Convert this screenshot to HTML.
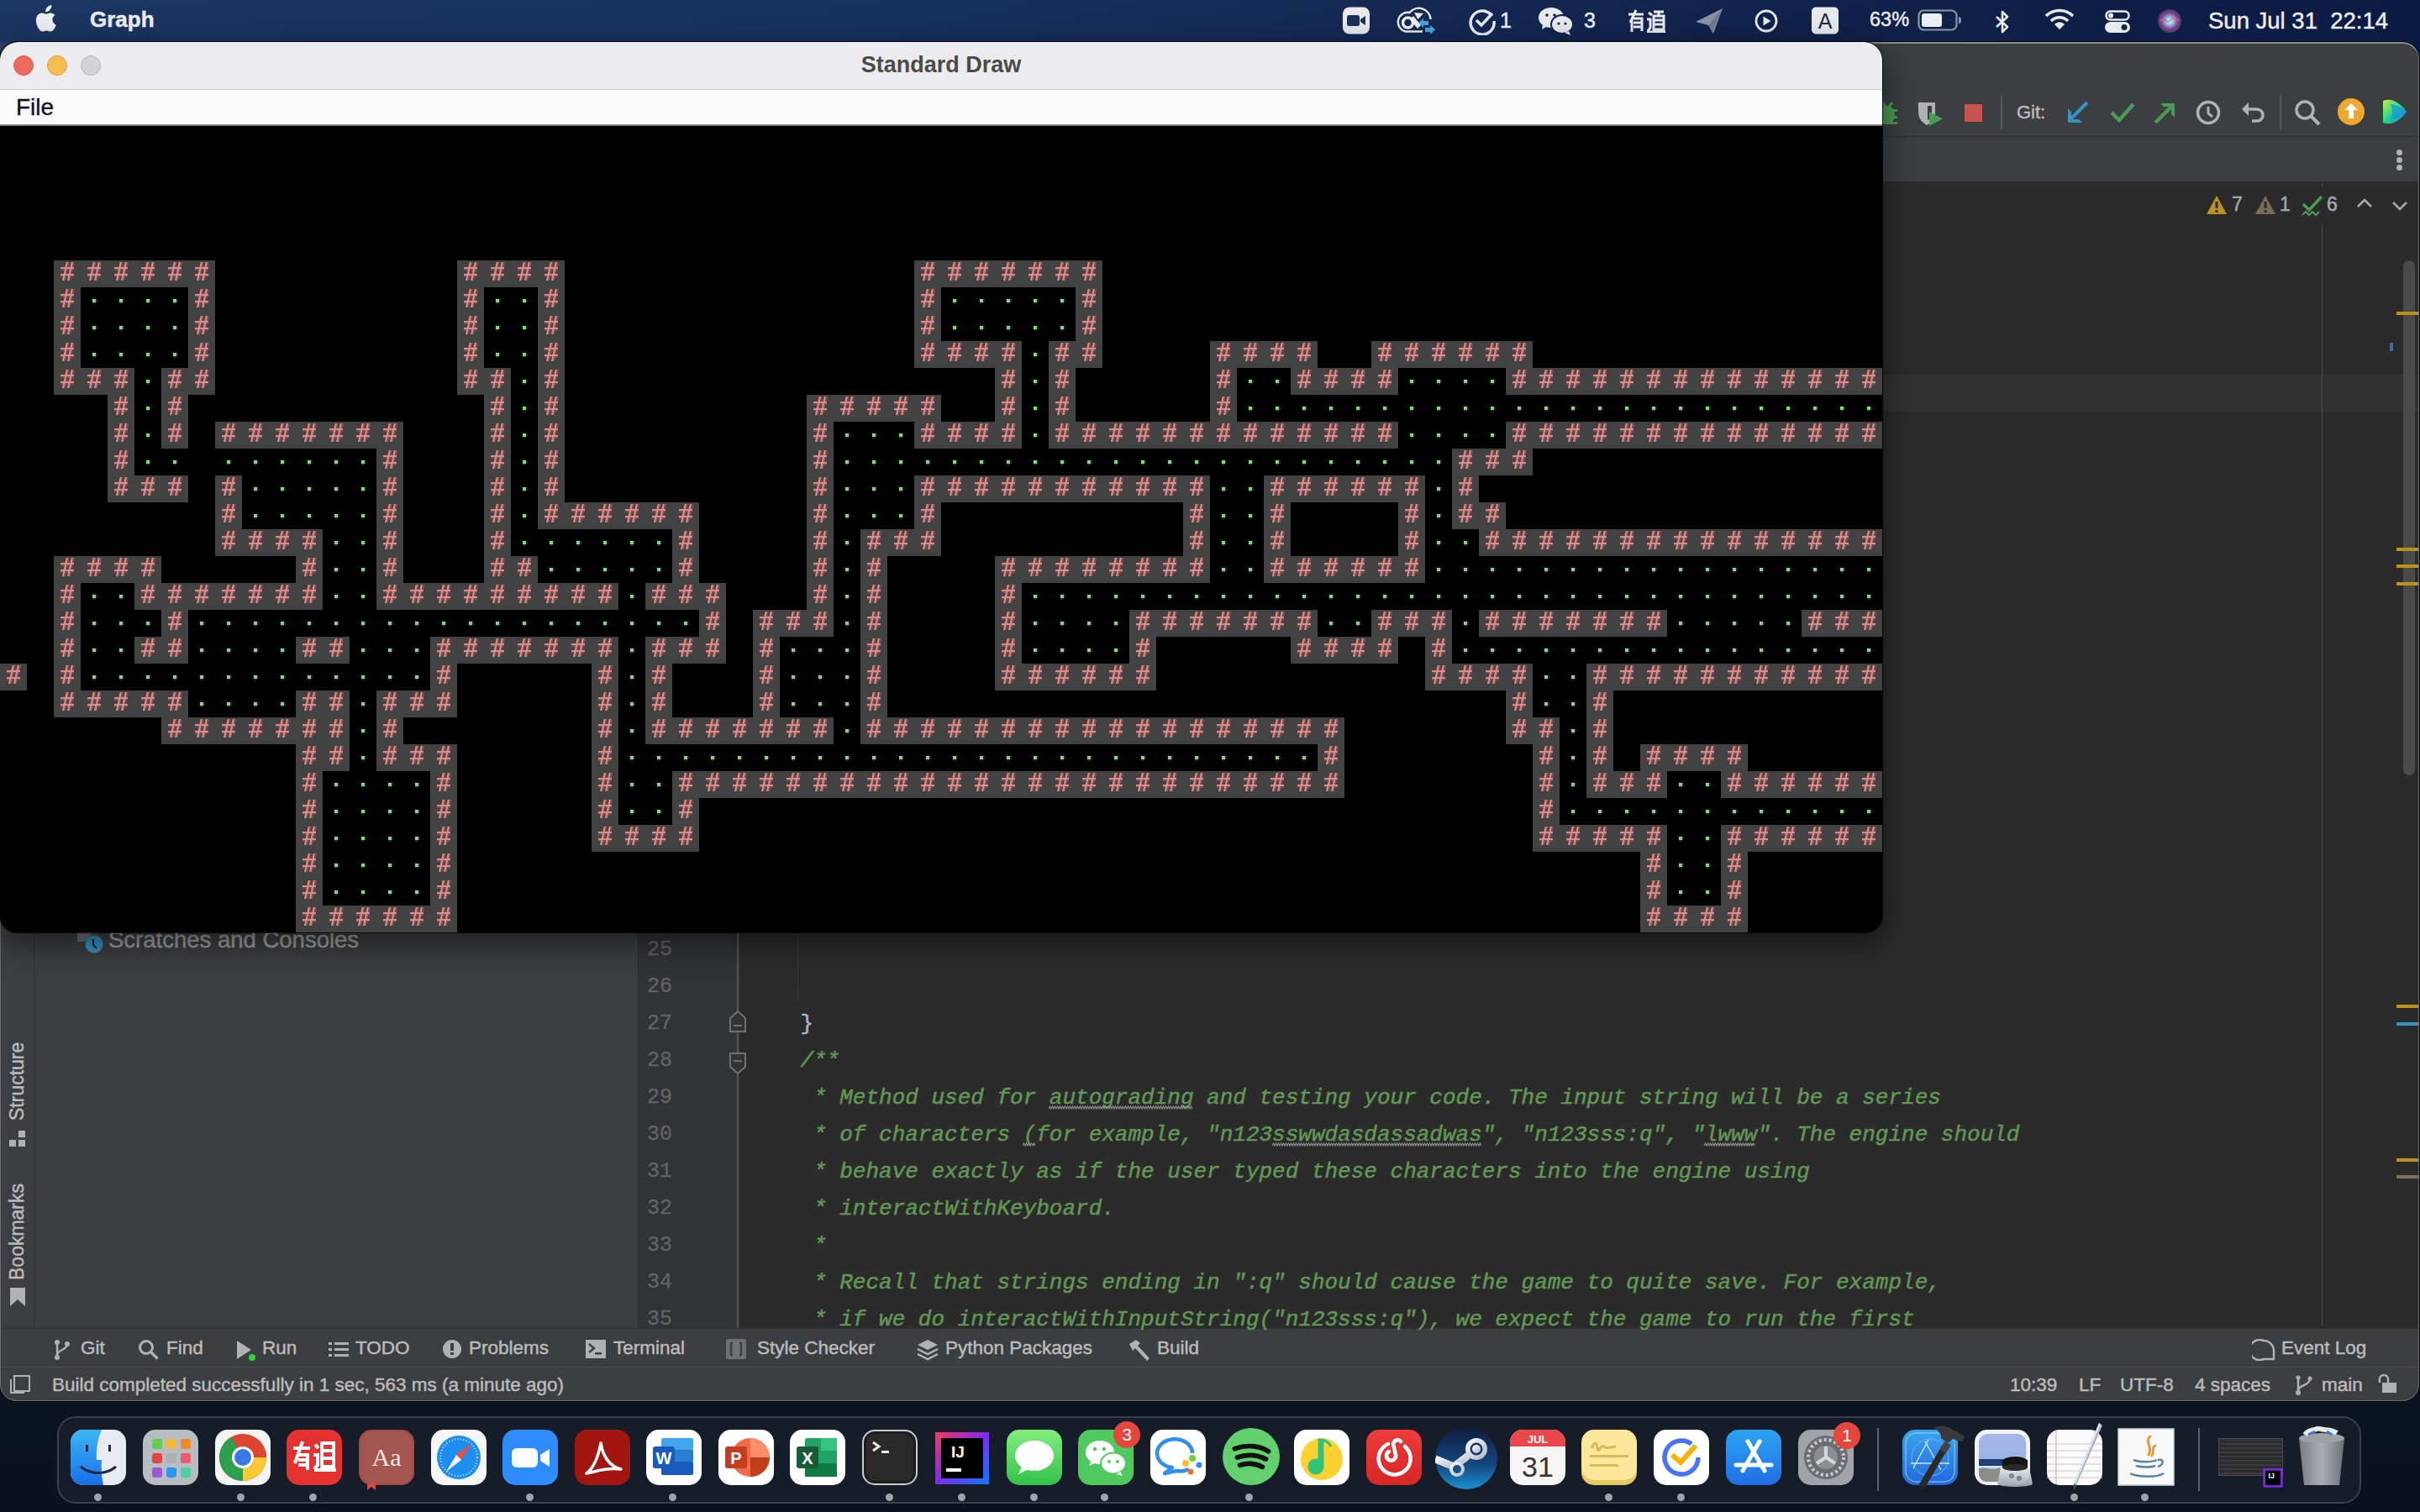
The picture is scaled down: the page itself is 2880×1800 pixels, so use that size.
<!DOCTYPE html>
<html><head><meta charset="utf-8">
<style>
*{margin:0;padding:0;box-sizing:border-box}
html,body{width:2880px;height:1800px;overflow:hidden}
body{position:relative;background:linear-gradient(90deg,#2a4470 0%,#1b3463 35%,#0c1f48 70%,#041a40 100%) 0 0/2880px 300px no-repeat,linear-gradient(180deg,#0d1626 1500px,#0a111c 1800px);font-family:"Liberation Sans",sans-serif}
.abs{position:absolute}
svg{display:block}
#menubar{position:absolute;left:0;top:0;width:2880px;height:50px;background:linear-gradient(90deg,#1d3562 0%,#183260 35%,#11244d 70%,#0c1b42 100%)}
#menubar .t{position:absolute;color:#eceef3;font-size:26px;white-space:nowrap;-webkit-text-stroke:0.45px currentColor}
#ij{position:absolute;left:0;top:50px;width:2879px;height:1618px;background:#3c3f41;border-radius:20px;overflow:hidden}
#ijb{position:absolute;left:0;top:50px;width:2879px;height:1618px;border-radius:20px;border:1px solid #6a6c6e;border-top:2px solid #8a8c8e;box-shadow:0 0 0 1px rgba(0,0,0,0.85);pointer-events:none}
#ij .r{position:absolute}
.ui{color:#bbbbbb;font-size:22.5px;white-space:nowrap;position:absolute;-webkit-text-stroke:0.45px currentColor}
.code{font-family:"Liberation Mono",monospace;font-size:26px;white-space:pre;position:absolute;line-height:44px;-webkit-text-stroke:0.5px currentColor}
.cm{color:#629755;font-style:italic}
.ln{font-family:"Liberation Mono",monospace;font-size:25px;color:#606366;-webkit-text-stroke:0.4px currentColor;position:absolute;width:60px;text-align:right;line-height:44px}
#sd{position:absolute;left:0;top:50px;width:2240px;height:1060px;border-radius:22px 22px 20px 20px;overflow:hidden;background:#000;box-shadow:0 0 0 1px rgba(0,0,0,0.7),0 12px 40px rgba(0,0,0,0.55)}
#sd .title{position:absolute;left:0;top:0;width:2240px;height:57px;background:#ececee;border-bottom:1px solid #cdcdcf}
#sd .menu{position:absolute;left:0;top:57px;width:2240px;height:43px;background:#fafafa;border-bottom:2px solid #7d7d7d}
#sd .game{position:absolute;left:0;top:100px}
#dock{position:absolute;left:68px;top:1686px;width:2742px;height:104px;border-radius:22px;background:#161c28;border:2px solid #3a3f4a}
.dot{position:absolute;top:1778px;width:9px;height:9px;border-radius:50%;background:#9fa3ab}
</style></head><body>
<div id="menubar">
  <svg class="abs" style="left:40px;top:6px" width="27" height="33" viewBox="0 0 27 33"><path fill="#eceef3" d="M19.5 5.5c1.3-1.6 2.2-3.7 2-5.5-1.9.1-4.1 1.3-5.4 2.8-1.2 1.4-2.2 3.5-1.9 5.5 2 .2 4-1 5.3-2.8zM22.3 17.6c0-3.6 2.9-5.3 3.1-5.4-1.7-2.4-4.3-2.8-5.2-2.8-2.2-.2-4.3 1.3-5.4 1.3-1.1 0-2.8-1.3-4.7-1.2C7.6 9.6 5.4 10.9 4.1 13c-2.6 4.5-.7 11.2 1.9 14.9 1.2 1.8 2.7 3.8 4.6 3.7 1.8-.1 2.5-1.2 4.8-1.2 2.2 0 2.9 1.2 4.8 1.1 2 0 3.3-1.8 4.5-3.6 1.4-2.1 2-4.1 2-4.2 0 0-3.9-1.5-4.4-6.1z"/></svg>
  <div class="t" style="left:107px;top:8px;font-weight:bold;font-size:26px">Graph</div>
<svg class="abs" style="left:1597px;top:8px" width="34" height="33" viewBox="0 0 34 33"><rect x="1" y="0.5" width="32" height="32" rx="8" fill="#e8eaee"/><rect x="6" y="10" width="15" height="13" rx="2.5" fill="#1b3058"/><path d="M22 15l6-4v11l-6-4z" fill="#1b3058"/></svg>
<svg class="abs" style="left:1650px;top:0px" width="70" height="50" viewBox="0 0 70 50"><path d="M23 37.5A10.5 10.5 0 0 1 27.5 15A14 14 0 0 1 52.5 23M23 37.5H43" stroke="#eceef3" stroke-width="2.3" fill="none"/><circle cx="25.5" cy="27" r="6" stroke="#eceef3" stroke-width="3.5" fill="none"/><polygon points="28,23 32,19 41,30 37,34" fill="#eceef3"/><polygon points="33,15 44,16 37.5,23" fill="#eceef3"/><path d="M38 27l6-5v3h6v5h-6v3z" fill="#44a6de"/><path d="M58 35l-6-5v3h-6v5h6v3z" fill="#44a6de"/></svg>
<svg class="abs" style="left:1747px;top:8px" width="34" height="34" viewBox="0 0 34 34"><path d="M27 9A14 14 0 1031 17" stroke="#e8eaee" stroke-width="3.5" fill="none"/><path d="M10 16l6 6 13-14" stroke="#e8eaee" stroke-width="3.5" fill="none"/></svg>
<div class="t" style="left:1785px;top:10px;font-size:25px">1</div>
<svg class="abs" style="left:1830px;top:8px" width="44" height="34" viewBox="0 0 44 34"><ellipse cx="16" cy="13" rx="15" ry="12" fill="#e8eaee"/><path d="M6 21l-1 6 7-4z" fill="#e8eaee"/><ellipse cx="29" cy="21" rx="13" ry="11" fill="#e8eaee" stroke="#11244d" stroke-width="2"/><path d="M37 29l2 5-7-3z" fill="#e8eaee"/><circle cx="11" cy="10" r="1.8" fill="#11244d"/><circle cx="20" cy="10" r="1.8" fill="#11244d"/><circle cx="25" cy="20" r="1.6" fill="#11244d"/><circle cx="33" cy="20" r="1.6" fill="#11244d"/></svg>
<div class="t" style="left:1885px;top:10px;font-size:25px">3</div>
<svg class="abs" style="left:1936px;top:11px" width="48" height="28" viewBox="0 0 48 28"><g stroke="#e8eaee" stroke-width="3" fill="none"><path d="M2 6h18M11 1L4 16M8 11h10v15M8 16h10M8 21h10M6 11v16"/><path d="M26 4l4 3M24 12h4v10l-3 4M24 27h22M32 3h12M38 3v4M32 8h12v16H32zM32 13h12M32 18h12"/></g></svg>
<svg class="abs" style="left:2017px;top:9px" width="34" height="32" viewBox="0 0 34 32"><path d="M1 17L33 1 22 31l-6-10z" fill="#8a95a6"/><path d="M16 21l17-20-12 27z" fill="#6f7a8c"/></svg>
<svg class="abs" style="left:2088px;top:11px" width="28" height="28" viewBox="0 0 28 28"><circle cx="14" cy="14" r="12" stroke="#e8eaee" stroke-width="2.8" fill="none"/><path d="M10.5 8.5l9 5.5-9 5.5z" fill="#e8eaee"/></svg>
<svg class="abs" style="left:2155px;top:8px" width="34" height="33" viewBox="0 0 34 33"><rect x="1" y="0.5" width="32" height="32" rx="5" fill="#e8eaee"/><text x="17" y="26" font-family="Liberation Sans" font-size="25" text-anchor="middle" fill="#1b2a4a">A</text></svg>
<div class="t" style="left:2225px;top:10px;font-size:23.5px">63%</div>
<svg class="abs" style="left:2282px;top:11px" width="55" height="26" viewBox="0 0 55 26"><rect x="1.5" y="1.5" width="45" height="23" rx="6" stroke="#8d96a8" stroke-width="2.2" fill="none"/><rect x="5" y="5" width="24" height="16" rx="3" fill="#eceef3"/><path d="M49 9v8c2 0 3-1 3-4s-1-4-3-4z" fill="#8d96a8"/></svg>
<svg class="abs" style="left:2372px;top:12px" width="22" height="28" viewBox="0 0 22 28"><path d="M4 8l13 12-6 6V2l6 6L4 20" stroke="#e8eaee" stroke-width="2.6" fill="none" stroke-linejoin="round"/></svg>
<svg class="abs" style="left:2433px;top:10px" width="36" height="26" viewBox="0 0 36 26"><path d="M2 9a23 23 0 0132 0" stroke="#e8eaee" stroke-width="3.5" fill="none"/><path d="M8 15a14 14 0 0120 0" stroke="#e8eaee" stroke-width="3.5" fill="none"/><path d="M12 19a8 8 0 0112 0l-6 6z" fill="#e8eaee"/></svg>
<svg class="abs" style="left:2505px;top:12px" width="30" height="27" viewBox="0 0 30 27"><rect x="1.5" y="1.5" width="27" height="10" rx="5" stroke="#e8eaee" stroke-width="2.5" fill="none"/><circle cx="7" cy="6.5" r="3" fill="#e8eaee"/><rect x="0" y="14" width="30" height="13" rx="6.5" fill="#e8eaee"/><circle cx="23" cy="20.5" r="3.5" fill="#11244d"/></svg>
<svg class="abs" style="left:2567px;top:10px" width="30" height="30" viewBox="0 0 30 30"><defs><radialGradient id="siri" cx="0.5" cy="0.5" r="0.5"><stop offset="0" stop-color="#ffffff"/><stop offset="0.35" stop-color="#7ec0e8"/><stop offset="0.7" stop-color="#8a3f8a"/><stop offset="1" stop-color="#3a3f70"/></radialGradient></defs><circle cx="15" cy="15" r="14" fill="url(#siri)"/><path d="M4 15c4-6 8 4 11 0s7-6 11 0" stroke="#e85a7a" stroke-width="2" fill="none" opacity="0.7"/></svg>
<div class="t" style="left:2628px;top:9px;font-size:27.5px">Sun Jul 31&nbsp; 22:14</div>

</div>

<div id="ij">
<!-- toolbar / title -->
<div class="r" style="left:0;top:112px;width:2879px;height:1px;background:#2d2f31"></div>
<div class="r" style="left:0;top:166px;width:2879px;height:1px;background:#2d2f31"></div>
<!-- body -->
<div class="r" style="left:40px;top:167px;width:1px;height:1364px;background:#2f3133"></div>
<div class="r" style="left:759px;top:167px;width:1px;height:1364px;background:#2f3133"></div>
<div class="r" style="left:760px;top:167px;width:120px;height:1364px;background:#313335"></div>
<div class="r" style="left:880px;top:167px;width:1999px;height:1364px;background:#2b2b2b"></div>
<div class="r" style="left:880px;top:396px;width:1999px;height:44px;background:#323232"></div>
<div class="r" style="left:2763px;top:168px;width:1px;height:4px;background:#4e4e4e"></div>
<div class="r" style="left:2763px;top:217px;width:1px;height:1312px;background:#4e4e4e"></div>
<div class="r" style="left:2860px;top:260px;width:14px;height:613px;border-radius:7px;background:#4a4a4a"></div>
<div class="r" style="left:2852px;top:321px;width:28px;height:4px;background:#be9117"></div>
<div class="r" style="left:2844px;top:358px;width:4px;height:10px;background:#3a6ea5"></div>
<div class="r" style="left:2852px;top:602px;width:28px;height:4px;background:#be9117"></div>
<div class="r" style="left:2852px;top:622px;width:28px;height:4px;background:#be9117"></div>
<div class="r" style="left:2852px;top:643px;width:28px;height:4px;background:#be9117"></div>
<div class="r" style="left:2852px;top:1146px;width:28px;height:4px;background:#be9117"></div>
<div class="r" style="left:2852px;top:1167px;width:28px;height:4px;background:#3592c4"></div>
<div class="r" style="left:2852px;top:1329px;width:28px;height:4px;background:#be9117"></div>
<div class="r" style="left:2852px;top:1349px;width:28px;height:4px;background:#7d7458"></div>
<!-- bottom bars -->
<div class="r" style="left:0;top:1531px;width:2879px;height:1px;background:#2f3133"></div>
<div class="r" style="left:0;top:1577px;width:2879px;height:1px;background:#4b4d4f"></div>

<!-- toolbar icons (rel y = page-50) -->
<svg class="r" style="left:2228px;top:66px" width="36" height="36" viewBox="0 0 36 36"><g fill="#499c54"><ellipse cx="18" cy="21" rx="9" ry="11"/><rect x="6" y="14" width="24" height="3"/><rect x="6" y="22" width="24" height="3"/><rect x="6" y="29" width="24" height="3"/></g><path d="M12 6l4 5M24 6l-4 5" stroke="#499c54" stroke-width="3"/></svg>
<svg class="r" style="left:2280px;top:68px" width="36" height="36" viewBox="0 0 36 36"><path d="M3 4h20v12c0 8-6 13-10 15-4-2-10-7-10-15z" fill="#afb1b3"/><path d="M14 8v17c2-1 4-3 5-5V8z" fill="#3c3f41"/><path d="M16 15l16 8.5-16 8.5z" fill="#499c54"/></svg>
<div class="r" style="left:2338px;top:74px;width:21px;height:21px;background:#c75450"></div>
<div class="r" style="left:2381px;top:64px;width:2px;height:40px;background:#555759"></div>
<div class="ui" style="left:2400px;top:71px;font-size:22px">Git:</div>
<svg class="r" style="left:2458px;top:70px" width="30" height="28" viewBox="0 0 30 28"><path d="M26 2L6 22" stroke="#3592c4" stroke-width="4"/><path d="M3 9v17h17l-4-4H7v-9z" fill="#3592c4"/></svg>
<svg class="r" style="left:2510px;top:70px" width="32" height="28" viewBox="0 0 32 28"><path d="M3 14l9 9L29 4" stroke="#499c54" stroke-width="4.5" fill="none"/></svg>
<svg class="r" style="left:2561px;top:70px" width="30" height="28" viewBox="0 0 30 28"><path d="M4 26L24 6" stroke="#499c54" stroke-width="4"/><path d="M10 3h17v17l-4-4V7h-9z" fill="#499c54"/></svg>
<svg class="r" style="left:2612px;top:68px" width="32" height="32" viewBox="0 0 32 32"><circle cx="16" cy="16" r="12.5" stroke="#afb1b3" stroke-width="3.5" fill="none"/><path d="M16 9v8l5 4" stroke="#afb1b3" stroke-width="3" fill="none"/></svg>
<svg class="r" style="left:2666px;top:68px" width="32" height="32" viewBox="0 0 32 32"><path d="M8 12h12a7 7 0 010 14h-6" stroke="#afb1b3" stroke-width="3.5" fill="none"/><path d="M2 12l8-8v16z" fill="#afb1b3"/></svg>
<div class="r" style="left:2713px;top:64px;width:2px;height:40px;background:#555759"></div>
<svg class="r" style="left:2730px;top:68px" width="34" height="34" viewBox="0 0 34 34"><circle cx="13" cy="13" r="10" stroke="#afb1b3" stroke-width="3.5" fill="none"/><path d="M20 20l10 10" stroke="#afb1b3" stroke-width="4"/></svg>
<svg class="r" style="left:2781px;top:66px" width="34" height="34" viewBox="0 0 34 34"><circle cx="17" cy="17" r="16" fill="#f0a732"/><path d="M17 7l-8 8h5v10h6V15h5z" fill="#fff"/></svg>
<svg class="r" style="left:2834px;top:66px" width="32" height="34" viewBox="0 0 32 34"><defs><linearGradient id="gl" x1="0" y1="0" x2="1" y2="1"><stop offset="0" stop-color="#c6f04a"/><stop offset="0.5" stop-color="#21d789"/><stop offset="1" stop-color="#087cfa"/></linearGradient></defs><path d="M2 4c10-4 20 2 28 13-8 11-18 17-28 13z" fill="url(#gl)"/><path d="M10 8c8 0 14 4 20 9-6 5-12 9-20 9 4-5 4-13 0-18z" fill="#1d8fe0" opacity="0.7"/></svg>
<!-- tab bar dots -->
<div class="r" style="left:2852px;top:128px;width:7px;height:7px;border-radius:50%;background:#afb1b3"></div>
<div class="r" style="left:2852px;top:137px;width:7px;height:7px;border-radius:50%;background:#afb1b3"></div>
<div class="r" style="left:2852px;top:146px;width:7px;height:7px;border-radius:50%;background:#afb1b3"></div>
<!-- inspection widget -->
<svg class="r" style="left:2625px;top:182px" width="26" height="24" viewBox="0 0 26 24"><path d="M13 1L25 23H1z" fill="#be9117"/><rect x="11.5" y="8" width="3" height="8" fill="#2b2b2b"/><rect x="11.5" y="18" width="3" height="3" fill="#2b2b2b"/></svg>
<div class="ui" style="left:2656px;top:180px;font-size:23px;color:#a9a9a9">7</div>
<svg class="r" style="left:2683px;top:182px" width="26" height="24" viewBox="0 0 26 24"><path d="M13 1L25 23H1z" fill="#756d56"/><rect x="11.5" y="8" width="3" height="8" fill="#2b2b2b"/><rect x="11.5" y="18" width="3" height="3" fill="#2b2b2b"/></svg>
<div class="ui" style="left:2713px;top:180px;font-size:23px;color:#a9a9a9">1</div>
<svg class="r" style="left:2739px;top:182px" width="26" height="26" viewBox="0 0 26 26"><path d="M2 11l7 7L24 2" stroke="#499c54" stroke-width="3.5" fill="none"/><path d="M1 24l4-4 4 4 4-4 4 4 4-4" stroke="#499c54" stroke-width="2" fill="none"/></svg>
<div class="ui" style="left:2769px;top:180px;font-size:23px;color:#a9a9a9">6</div>
<svg class="r" style="left:2805px;top:186px" width="18" height="12" viewBox="0 0 18 12"><path d="M1 10l8-8 8 8" stroke="#a9a9a9" stroke-width="2.5" fill="none"/></svg>
<svg class="r" style="left:2847px;top:189px" width="18" height="12" viewBox="0 0 18 12"><path d="M1 2l8 8 8-8" stroke="#a9a9a9" stroke-width="2.5" fill="none"/></svg>

<!-- project panel -->
<svg class="r" style="left:90px;top:1058px" width="36" height="30" viewBox="0 0 36 30"><path d="M2 2h19l-6 6-5 5H2z" fill="#6e7377"/><circle cx="22" cy="16" r="10.5" fill="#3592c4"/><path d="M21 10v7l4 4" stroke="#2b2b2b" stroke-width="2" fill="none"/></svg>
<div class="ui" style="left:129px;top:1055px;font-size:27.5px;line-height:27.5px;color:#9fa1a3">Scratches and Consoles</div>

<!-- left strip vertical labels -->
<div class="ui" style="left:-27px;top:1224px;transform:rotate(-90deg);width:96px;height:24px;font-size:23px;line-height:23px">Structure</div>
<svg class="r" style="left:11px;top:1296px" width="20" height="20" viewBox="0 0 20 20"><rect x="11" y="0" width="8" height="8" fill="#afb1b3"/><rect x="0" y="11" width="8" height="8" fill="#afb1b3"/><rect x="11" y="11" width="8" height="8" fill="#afb1b3"/></svg>
<div class="ui" style="left:-41px;top:1400px;transform:rotate(-90deg);width:124px;height:24px;font-size:23px;line-height:23px">Bookmarks</div>
<svg class="r" style="left:11px;top:1482px" width="20" height="24" viewBox="0 0 20 24"><path d="M1 1h18v22l-9-8-9 8z" fill="#afb1b3"/></svg>

<!-- gutter -->
<div class="ln" style="left:740px;top:1059px">25<br>26<br>27<br>28<br>29<br>30<br>31<br>32<br>33<br>34<br>35</div>
<div class="r" style="left:877px;top:1058px;width:2px;height:473px;background:#555759"></div>
<svg class="r" style="left:866px;top:1148px" width="24" height="44" viewBox="0 0 24 44"><path d="M3 30V14l9-8 9 8v16z" fill="#313335" stroke="#6e7072" stroke-width="2"/><path d="M7 23h10" stroke="#6e7072" stroke-width="2"/></svg>
<svg class="r" style="left:866px;top:1196px" width="24" height="44" viewBox="0 0 24 44"><path d="M3 8v16l9 8 9-8V8z" fill="#313335" stroke="#6e7072" stroke-width="2"/><path d="M7 17h10" stroke="#6e7072" stroke-width="2"/></svg>
<div class="r" style="left:949px;top:1058px;width:1px;height:85px;background:#3b3b3b"></div>
<!-- code -->
<div class="code" style="left:890px;top:1059px;color:#a9b7c6">

    }
<span class="cm">    /**
     * Method used for autograding and testing your code. The input string will be a series
     * of characters (for example, "n123sswwdasdassadwas", "n123sss:q", "lwww". The engine should
     * behave exactly as if the user typed these characters into the engine using
     * interactWithKeyboard.
     *
     * Recall that strings ending in ":q" should cause the game to quite save. For example,
     * if we do interactWithInputString("n123sss:q"), we expect the game to run the first</span></div>
<svg class="r" style="left:1248px;top:1266px" width="171" height="6" viewBox="0 0 171 6"><path d="M0 4 l1.5 -3 l1.5 3 l1.5 -3 l1.5 3 l1.5 -3 l1.5 3 l1.5 -3 l1.5 3 l1.5 -3 l1.5 3 l1.5 -3 l1.5 3 l1.5 -3 l1.5 3 l1.5 -3 l1.5 3 l1.5 -3 l1.5 3 l1.5 -3 l1.5 3 l1.5 -3 l1.5 3 l1.5 -3 l1.5 3 l1.5 -3 l1.5 3 l1.5 -3 l1.5 3 l1.5 -3 l1.5 3 l1.5 -3 l1.5 3 l1.5 -3 l1.5 3 l1.5 -3 l1.5 3 l1.5 -3 l1.5 3 l1.5 -3 l1.5 3 l1.5 -3 l1.5 3 l1.5 -3 l1.5 3 l1.5 -3 l1.5 3 l1.5 -3 l1.5 3 l1.5 -3 l1.5 3 l1.5 -3 l1.5 3 l1.5 -3 l1.5 3 l1.5 -3 l1.5 3 l1.5 -3 l1.5 3 l1.5 -3 l1.5 3 l1.5 -3 l1.5 3 l1.5 -3 l1.5 3 l1.5 -3 l1.5 3 l1.5 -3 l1.5 3 l1.5 -3 l1.5 3 l1.5 -3 l1.5 3 l1.5 -3 l1.5 3 l1.5 -3 l1.5 3 l1.5 -3 l1.5 3 l1.5 -3 l1.5 3 l1.5 -3 l1.5 3 l1.5 -3 l1.5 3 l1.5 -3 l1.5 3 l1.5 -3 l1.5 3 l1.5 -3 l1.5 3 l1.5 -3 l1.5 3 l1.5 -3 l1.5 3 l1.5 -3 l1.5 3 l1.5 -3 l1.5 3 l1.5 -3 l1.5 3 l1.5 -3 l1.5 3 l1.5 -3 l1.5 3 l1.5 -3 l1.5 3 l1.5 -3 l1.5 3 l1.5 -3 l1.5 3 l1.5 -3 l1.5 3 l1.5 -3 l1.5 3" stroke="#8c8c8c" stroke-width="1.2" fill="none"/></svg>
<svg class="r" style="left:1217px;top:1310px" width="15" height="6" viewBox="0 0 15 6"><path d="M0 4 l1.5 -3 l1.5 3 l1.5 -3 l1.5 3 l1.5 -3 l1.5 3 l1.5 -3 l1.5 3 l1.5 -3 l1.5 3" stroke="#8c8c8c" stroke-width="1.2" fill="none"/></svg>
<svg class="r" style="left:1514px;top:1310px" width="249" height="6" viewBox="0 0 249 6"><path d="M0 4 l1.5 -3 l1.5 3 l1.5 -3 l1.5 3 l1.5 -3 l1.5 3 l1.5 -3 l1.5 3 l1.5 -3 l1.5 3 l1.5 -3 l1.5 3 l1.5 -3 l1.5 3 l1.5 -3 l1.5 3 l1.5 -3 l1.5 3 l1.5 -3 l1.5 3 l1.5 -3 l1.5 3 l1.5 -3 l1.5 3 l1.5 -3 l1.5 3 l1.5 -3 l1.5 3 l1.5 -3 l1.5 3 l1.5 -3 l1.5 3 l1.5 -3 l1.5 3 l1.5 -3 l1.5 3 l1.5 -3 l1.5 3 l1.5 -3 l1.5 3 l1.5 -3 l1.5 3 l1.5 -3 l1.5 3 l1.5 -3 l1.5 3 l1.5 -3 l1.5 3 l1.5 -3 l1.5 3 l1.5 -3 l1.5 3 l1.5 -3 l1.5 3 l1.5 -3 l1.5 3 l1.5 -3 l1.5 3 l1.5 -3 l1.5 3 l1.5 -3 l1.5 3 l1.5 -3 l1.5 3 l1.5 -3 l1.5 3 l1.5 -3 l1.5 3 l1.5 -3 l1.5 3 l1.5 -3 l1.5 3 l1.5 -3 l1.5 3 l1.5 -3 l1.5 3 l1.5 -3 l1.5 3 l1.5 -3 l1.5 3 l1.5 -3 l1.5 3 l1.5 -3 l1.5 3 l1.5 -3 l1.5 3 l1.5 -3 l1.5 3 l1.5 -3 l1.5 3 l1.5 -3 l1.5 3 l1.5 -3 l1.5 3 l1.5 -3 l1.5 3 l1.5 -3 l1.5 3 l1.5 -3 l1.5 3 l1.5 -3 l1.5 3 l1.5 -3 l1.5 3 l1.5 -3 l1.5 3 l1.5 -3 l1.5 3 l1.5 -3 l1.5 3 l1.5 -3 l1.5 3 l1.5 -3 l1.5 3 l1.5 -3 l1.5 3 l1.5 -3 l1.5 3 l1.5 -3 l1.5 3 l1.5 -3 l1.5 3 l1.5 -3 l1.5 3 l1.5 -3 l1.5 3 l1.5 -3 l1.5 3 l1.5 -3 l1.5 3 l1.5 -3 l1.5 3 l1.5 -3 l1.5 3 l1.5 -3 l1.5 3 l1.5 -3 l1.5 3 l1.5 -3 l1.5 3 l1.5 -3 l1.5 3 l1.5 -3 l1.5 3 l1.5 -3 l1.5 3 l1.5 -3 l1.5 3 l1.5 -3 l1.5 3 l1.5 -3 l1.5 3 l1.5 -3 l1.5 3 l1.5 -3 l1.5 3 l1.5 -3 l1.5 3 l1.5 -3 l1.5 3 l1.5 -3 l1.5 3 l1.5 -3 l1.5 3 l1.5 -3 l1.5 3" stroke="#8c8c8c" stroke-width="1.2" fill="none"/></svg>
<svg class="r" style="left:2028px;top:1310px" width="62" height="6" viewBox="0 0 62 6"><path d="M0 4 l1.5 -3 l1.5 3 l1.5 -3 l1.5 3 l1.5 -3 l1.5 3 l1.5 -3 l1.5 3 l1.5 -3 l1.5 3 l1.5 -3 l1.5 3 l1.5 -3 l1.5 3 l1.5 -3 l1.5 3 l1.5 -3 l1.5 3 l1.5 -3 l1.5 3 l1.5 -3 l1.5 3 l1.5 -3 l1.5 3 l1.5 -3 l1.5 3 l1.5 -3 l1.5 3 l1.5 -3 l1.5 3 l1.5 -3 l1.5 3 l1.5 -3 l1.5 3 l1.5 -3 l1.5 3 l1.5 -3 l1.5 3 l1.5 -3 l1.5 3" stroke="#8c8c8c" stroke-width="1.2" fill="none"/></svg>
<!-- bottom tool bar -->
<svg class="r" style="left:64px;top:1543.5px" width="20" height="26" viewBox="0 0 20 26"><circle cx="4" cy="4" r="3" fill="#afb1b3"/><circle cx="4" cy="22" r="3" fill="#afb1b3"/><circle cx="16" cy="6" r="3" fill="#afb1b3"/><path d="M4 4v18M16 6c0 8-12 6-12 14" stroke="#afb1b3" stroke-width="2.5" fill="none"/></svg>
<div class="ui" style="left:96px;top:1541.5px">Git</div>
<svg class="r" style="left:164px;top:1543.5px" width="26" height="26" viewBox="0 0 26 26"><circle cx="10" cy="10" r="7.5" stroke="#afb1b3" stroke-width="3" fill="none"/><path d="M15.5 15.5l8 8" stroke="#afb1b3" stroke-width="3.5"/></svg>
<div class="ui" style="left:198px;top:1541.5px">Find</div>
<svg class="r" style="left:280px;top:1543.5px" width="28" height="28" viewBox="0 0 28 28"><path d="M2 2l17 11L2 24z" fill="#afb1b3"/><circle cx="20" cy="22" r="4" fill="#34d334"/></svg>
<div class="ui" style="left:312px;top:1541.5px">Run</div>
<svg class="r" style="left:391px;top:1546.5px" width="24" height="20" viewBox="0 0 24 20"><g fill="#afb1b3"><rect x="0" y="1" width="4" height="3"/><rect x="7" y="1" width="17" height="3"/><rect x="0" y="8" width="4" height="3"/><rect x="7" y="8" width="17" height="3"/><rect x="0" y="15" width="4" height="3"/><rect x="7" y="15" width="17" height="3"/></g></svg>
<div class="ui" style="left:423px;top:1541.5px">TODO</div>
<svg class="r" style="left:526px;top:1543.5px" width="24" height="24" viewBox="0 0 24 24"><circle cx="12" cy="12" r="11" fill="#afb1b3"/><rect x="10" y="5" width="4" height="9" fill="#3c3f41"/><rect x="10" y="16" width="4" height="3" fill="#3c3f41"/></svg>
<div class="ui" style="left:558px;top:1541.5px">Problems</div>
<svg class="r" style="left:697px;top:1544.5px" width="24" height="22" viewBox="0 0 24 22"><rect x="0" y="0" width="24" height="22" fill="#afb1b3"/><path d="M4 5l6 5-6 5" stroke="#3c3f41" stroke-width="2.5" fill="none"/><rect x="11" y="15" width="8" height="2.5" fill="#3c3f41"/></svg>
<div class="ui" style="left:730px;top:1541.5px">Terminal</div>
<svg class="r" style="left:864px;top:1543.5px" width="24" height="24" viewBox="0 0 24 24"><rect x="0" y="0" width="24" height="24" rx="2" fill="#6e7072"/><path d="M8 5H6v14h2M16 5h2v14h-2" stroke="#3c3f41" stroke-width="2.5" fill="none"/></svg>
<div class="ui" style="left:901px;top:1541.5px">Style Checker</div>
<svg class="r" style="left:1091px;top:1543.5px" width="26" height="26" viewBox="0 0 26 26"><path d="M13 1l12 6-12 6-12-6z" fill="#afb1b3"/><path d="M1 12l12 6 12-6M1 18l12 6 12-6" stroke="#afb1b3" stroke-width="2.5" fill="none"/></svg>
<div class="ui" style="left:1125px;top:1541.5px">Python Packages</div>
<svg class="r" style="left:1342px;top:1543.5px" width="28" height="26" viewBox="0 0 28 26"><path d="M2 6l8-5 5 4-3 3 14 15-3 3L9 11l-3 3z" fill="#afb1b3"/></svg>
<div class="ui" style="left:1377px;top:1541.5px">Build</div>
<svg class="r" style="left:2680px;top:1543.5px" width="28" height="26" viewBox="0 0 28 26"><path d="M14 2a12 12 0 100 22h12V14A12 12 0 0014 2z" stroke="#afb1b3" stroke-width="2.5" fill="none"/></svg>
<div class="ui" style="left:2715px;top:1541.5px">Event Log</div>

<!-- status bar -->
<svg class="r" style="left:11px;top:1586px" width="26" height="24" viewBox="0 0 26 24"><path d="M6 2h18v18H6zM2 6v16h16" stroke="#afb1b3" stroke-width="2" fill="none"/></svg>
<div class="ui" style="left:62px;top:1586px">Build completed successfully in 1 sec, 563 ms (a minute ago)</div>
<div class="ui" style="left:2392px;top:1586px">10:39</div>
<div class="ui" style="left:2474px;top:1586px">LF</div>
<div class="ui" style="left:2523px;top:1586px">UTF-8</div>
<div class="ui" style="left:2612px;top:1586px">4 spaces</div>
<svg class="r" style="left:2730px;top:1586px" width="24" height="26" viewBox="0 0 24 26"><circle cx="5" cy="22" r="3" fill="#afb1b3"/><circle cx="5" cy="4" r="2.5" fill="#afb1b3"/><circle cx="19" cy="5" r="2.5" fill="#afb1b3"/><path d="M5 4v18M19 5c0 9-14 7-14 15" stroke="#afb1b3" stroke-width="2.5" fill="none"/></svg>
<div class="ui" style="left:2763px;top:1586px">main</div>
<svg class="r" style="left:2829px;top:1585px" width="26" height="26" viewBox="0 0 26 26"><path d="M3 11V7a5 5 0 0110 0v4" stroke="#afb1b3" stroke-width="2.5" fill="none"/><rect x="6" y="11" width="17" height="12" fill="#afb1b3"/></svg>

</div>
<div id="ijb"></div>

<div id="sd">
  <div class="title">
    <div class="abs" style="left:16px;top:16px;width:24px;height:24px;border-radius:50%;background:#ee6a5f;border:1px solid #d9574c"></div>
    <div class="abs" style="left:56px;top:16px;width:24px;height:24px;border-radius:50%;background:#f5be4f;border:1px solid #dca33a"></div>
    <div class="abs" style="left:96px;top:16px;width:24px;height:24px;border-radius:50%;background:#d3d3d5;border:1px solid #b9b9bb"></div>
    <div class="abs" style="left:0;top:12px;width:2240px;text-align:center;font-weight:bold;font-size:27px;color:#4a4a4a">Standard Draw</div>
  </div>
  <div class="menu"><div class="abs" style="left:19px;top:5px;font-size:28px;color:#111;-webkit-text-stroke:0.35px #111">File</div></div>
<svg class="game" width="2240" height="960" viewBox="0 0 2240 960" shape-rendering="crispEdges">
<defs>
<pattern id="pw" width="32" height="32" patternUnits="userSpaceOnUse"><rect width="32" height="32" fill="#424242"/><g fill="#e08484" opacity="0.25" shape-rendering="geometricPrecision"><g transform="translate(2,0)"><polygon points="14.8,2 17,2 12.2,24 10,24"/><polygon points="20.8,2 23,2 18.2,24 16,24"/></g><g transform="translate(0,2)"><rect x="8" y="8" width="16" height="2"/><rect x="8" y="16" width="16" height="2"/></g></g><g fill="#e48989" shape-rendering="geometricPrecision"><polygon points="14.8,2 17,2 12.2,24 10,24"/><polygon points="20.8,2 23,2 18.2,24 16,24"/><rect x="8" y="8" width="16" height="2"/><rect x="8" y="16" width="16" height="2"/></g></pattern>
<pattern id="pf" width="32" height="32" patternUnits="userSpaceOnUse"><rect x="18" y="14" width="2" height="4" fill="#80c080" opacity="0.22"/><rect x="14" y="18" width="4" height="2" fill="#80c080" opacity="0.22"/><rect x="14" y="14" width="4" height="4" fill="#8ad494"/></pattern>
</defs>
<rect x="64" y="160" width="192" height="32" fill="url(#pw)"/>
<rect x="544" y="160" width="128" height="32" fill="url(#pw)"/>
<rect x="1088" y="160" width="224" height="32" fill="url(#pw)"/>
<rect x="64" y="192" width="32" height="32" fill="url(#pw)"/>
<rect x="96" y="192" width="128" height="32" fill="url(#pf)"/>
<rect x="224" y="192" width="32" height="32" fill="url(#pw)"/>
<rect x="544" y="192" width="32" height="32" fill="url(#pw)"/>
<rect x="576" y="192" width="64" height="32" fill="url(#pf)"/>
<rect x="640" y="192" width="32" height="32" fill="url(#pw)"/>
<rect x="1088" y="192" width="32" height="32" fill="url(#pw)"/>
<rect x="1120" y="192" width="160" height="32" fill="url(#pf)"/>
<rect x="1280" y="192" width="32" height="32" fill="url(#pw)"/>
<rect x="64" y="224" width="32" height="32" fill="url(#pw)"/>
<rect x="96" y="224" width="128" height="32" fill="url(#pf)"/>
<rect x="224" y="224" width="32" height="32" fill="url(#pw)"/>
<rect x="544" y="224" width="32" height="32" fill="url(#pw)"/>
<rect x="576" y="224" width="64" height="32" fill="url(#pf)"/>
<rect x="640" y="224" width="32" height="32" fill="url(#pw)"/>
<rect x="1088" y="224" width="32" height="32" fill="url(#pw)"/>
<rect x="1120" y="224" width="160" height="32" fill="url(#pf)"/>
<rect x="1280" y="224" width="32" height="32" fill="url(#pw)"/>
<rect x="64" y="256" width="32" height="32" fill="url(#pw)"/>
<rect x="96" y="256" width="128" height="32" fill="url(#pf)"/>
<rect x="224" y="256" width="32" height="32" fill="url(#pw)"/>
<rect x="544" y="256" width="32" height="32" fill="url(#pw)"/>
<rect x="576" y="256" width="64" height="32" fill="url(#pf)"/>
<rect x="640" y="256" width="32" height="32" fill="url(#pw)"/>
<rect x="1088" y="256" width="128" height="32" fill="url(#pw)"/>
<rect x="1216" y="256" width="32" height="32" fill="url(#pf)"/>
<rect x="1248" y="256" width="64" height="32" fill="url(#pw)"/>
<rect x="1440" y="256" width="128" height="32" fill="url(#pw)"/>
<rect x="1632" y="256" width="192" height="32" fill="url(#pw)"/>
<rect x="64" y="288" width="96" height="32" fill="url(#pw)"/>
<rect x="160" y="288" width="32" height="32" fill="url(#pf)"/>
<rect x="192" y="288" width="64" height="32" fill="url(#pw)"/>
<rect x="544" y="288" width="64" height="32" fill="url(#pw)"/>
<rect x="608" y="288" width="32" height="32" fill="url(#pf)"/>
<rect x="640" y="288" width="32" height="32" fill="url(#pw)"/>
<rect x="1184" y="288" width="32" height="32" fill="url(#pw)"/>
<rect x="1216" y="288" width="32" height="32" fill="url(#pf)"/>
<rect x="1248" y="288" width="32" height="32" fill="url(#pw)"/>
<rect x="1440" y="288" width="32" height="32" fill="url(#pw)"/>
<rect x="1472" y="288" width="64" height="32" fill="url(#pf)"/>
<rect x="1536" y="288" width="128" height="32" fill="url(#pw)"/>
<rect x="1664" y="288" width="128" height="32" fill="url(#pf)"/>
<rect x="1792" y="288" width="448" height="32" fill="url(#pw)"/>
<rect x="128" y="320" width="32" height="32" fill="url(#pw)"/>
<rect x="160" y="320" width="32" height="32" fill="url(#pf)"/>
<rect x="192" y="320" width="32" height="32" fill="url(#pw)"/>
<rect x="576" y="320" width="32" height="32" fill="url(#pw)"/>
<rect x="608" y="320" width="32" height="32" fill="url(#pf)"/>
<rect x="640" y="320" width="32" height="32" fill="url(#pw)"/>
<rect x="960" y="320" width="160" height="32" fill="url(#pw)"/>
<rect x="1184" y="320" width="32" height="32" fill="url(#pw)"/>
<rect x="1216" y="320" width="32" height="32" fill="url(#pf)"/>
<rect x="1248" y="320" width="32" height="32" fill="url(#pw)"/>
<rect x="1440" y="320" width="32" height="32" fill="url(#pw)"/>
<rect x="1472" y="320" width="768" height="32" fill="url(#pf)"/>
<rect x="128" y="352" width="32" height="32" fill="url(#pw)"/>
<rect x="160" y="352" width="32" height="32" fill="url(#pf)"/>
<rect x="192" y="352" width="32" height="32" fill="url(#pw)"/>
<rect x="256" y="352" width="224" height="32" fill="url(#pw)"/>
<rect x="576" y="352" width="32" height="32" fill="url(#pw)"/>
<rect x="608" y="352" width="32" height="32" fill="url(#pf)"/>
<rect x="640" y="352" width="32" height="32" fill="url(#pw)"/>
<rect x="960" y="352" width="32" height="32" fill="url(#pw)"/>
<rect x="992" y="352" width="96" height="32" fill="url(#pf)"/>
<rect x="1088" y="352" width="128" height="32" fill="url(#pw)"/>
<rect x="1216" y="352" width="32" height="32" fill="url(#pf)"/>
<rect x="1248" y="352" width="416" height="32" fill="url(#pw)"/>
<rect x="1664" y="352" width="128" height="32" fill="url(#pf)"/>
<rect x="1792" y="352" width="448" height="32" fill="url(#pw)"/>
<rect x="128" y="384" width="32" height="32" fill="url(#pw)"/>
<rect x="160" y="384" width="64" height="32" fill="url(#pf)"/>
<rect x="256" y="384" width="192" height="32" fill="url(#pf)"/>
<rect x="448" y="384" width="32" height="32" fill="url(#pw)"/>
<rect x="576" y="384" width="32" height="32" fill="url(#pw)"/>
<rect x="608" y="384" width="32" height="32" fill="url(#pf)"/>
<rect x="640" y="384" width="32" height="32" fill="url(#pw)"/>
<rect x="960" y="384" width="32" height="32" fill="url(#pw)"/>
<rect x="992" y="384" width="736" height="32" fill="url(#pf)"/>
<rect x="1728" y="384" width="96" height="32" fill="url(#pw)"/>
<rect x="128" y="416" width="96" height="32" fill="url(#pw)"/>
<rect x="256" y="416" width="32" height="32" fill="url(#pw)"/>
<rect x="288" y="416" width="160" height="32" fill="url(#pf)"/>
<rect x="448" y="416" width="32" height="32" fill="url(#pw)"/>
<rect x="576" y="416" width="32" height="32" fill="url(#pw)"/>
<rect x="608" y="416" width="32" height="32" fill="url(#pf)"/>
<rect x="640" y="416" width="32" height="32" fill="url(#pw)"/>
<rect x="960" y="416" width="32" height="32" fill="url(#pw)"/>
<rect x="992" y="416" width="96" height="32" fill="url(#pf)"/>
<rect x="1088" y="416" width="352" height="32" fill="url(#pw)"/>
<rect x="1440" y="416" width="64" height="32" fill="url(#pf)"/>
<rect x="1504" y="416" width="192" height="32" fill="url(#pw)"/>
<rect x="1696" y="416" width="32" height="32" fill="url(#pf)"/>
<rect x="1728" y="416" width="32" height="32" fill="url(#pw)"/>
<rect x="256" y="448" width="32" height="32" fill="url(#pw)"/>
<rect x="288" y="448" width="160" height="32" fill="url(#pf)"/>
<rect x="448" y="448" width="32" height="32" fill="url(#pw)"/>
<rect x="576" y="448" width="32" height="32" fill="url(#pw)"/>
<rect x="608" y="448" width="32" height="32" fill="url(#pf)"/>
<rect x="640" y="448" width="192" height="32" fill="url(#pw)"/>
<rect x="960" y="448" width="32" height="32" fill="url(#pw)"/>
<rect x="992" y="448" width="96" height="32" fill="url(#pf)"/>
<rect x="1088" y="448" width="32" height="32" fill="url(#pw)"/>
<rect x="1408" y="448" width="32" height="32" fill="url(#pw)"/>
<rect x="1440" y="448" width="64" height="32" fill="url(#pf)"/>
<rect x="1504" y="448" width="32" height="32" fill="url(#pw)"/>
<rect x="1664" y="448" width="32" height="32" fill="url(#pw)"/>
<rect x="1696" y="448" width="32" height="32" fill="url(#pf)"/>
<rect x="1728" y="448" width="64" height="32" fill="url(#pw)"/>
<rect x="256" y="480" width="128" height="32" fill="url(#pw)"/>
<rect x="384" y="480" width="64" height="32" fill="url(#pf)"/>
<rect x="448" y="480" width="32" height="32" fill="url(#pw)"/>
<rect x="576" y="480" width="32" height="32" fill="url(#pw)"/>
<rect x="608" y="480" width="192" height="32" fill="url(#pf)"/>
<rect x="800" y="480" width="32" height="32" fill="url(#pw)"/>
<rect x="960" y="480" width="32" height="32" fill="url(#pw)"/>
<rect x="992" y="480" width="32" height="32" fill="url(#pf)"/>
<rect x="1024" y="480" width="96" height="32" fill="url(#pw)"/>
<rect x="1408" y="480" width="32" height="32" fill="url(#pw)"/>
<rect x="1440" y="480" width="64" height="32" fill="url(#pf)"/>
<rect x="1504" y="480" width="32" height="32" fill="url(#pw)"/>
<rect x="1664" y="480" width="32" height="32" fill="url(#pw)"/>
<rect x="1696" y="480" width="64" height="32" fill="url(#pf)"/>
<rect x="1760" y="480" width="480" height="32" fill="url(#pw)"/>
<rect x="64" y="512" width="128" height="32" fill="url(#pw)"/>
<rect x="352" y="512" width="32" height="32" fill="url(#pw)"/>
<rect x="384" y="512" width="64" height="32" fill="url(#pf)"/>
<rect x="448" y="512" width="32" height="32" fill="url(#pw)"/>
<rect x="576" y="512" width="64" height="32" fill="url(#pw)"/>
<rect x="640" y="512" width="160" height="32" fill="url(#pf)"/>
<rect x="800" y="512" width="32" height="32" fill="url(#pw)"/>
<rect x="960" y="512" width="32" height="32" fill="url(#pw)"/>
<rect x="992" y="512" width="32" height="32" fill="url(#pf)"/>
<rect x="1024" y="512" width="32" height="32" fill="url(#pw)"/>
<rect x="1184" y="512" width="256" height="32" fill="url(#pw)"/>
<rect x="1440" y="512" width="64" height="32" fill="url(#pf)"/>
<rect x="1504" y="512" width="192" height="32" fill="url(#pw)"/>
<rect x="1696" y="512" width="544" height="32" fill="url(#pf)"/>
<rect x="64" y="544" width="32" height="32" fill="url(#pw)"/>
<rect x="96" y="544" width="64" height="32" fill="url(#pf)"/>
<rect x="160" y="544" width="224" height="32" fill="url(#pw)"/>
<rect x="384" y="544" width="64" height="32" fill="url(#pf)"/>
<rect x="448" y="544" width="288" height="32" fill="url(#pw)"/>
<rect x="736" y="544" width="32" height="32" fill="url(#pf)"/>
<rect x="768" y="544" width="96" height="32" fill="url(#pw)"/>
<rect x="960" y="544" width="32" height="32" fill="url(#pw)"/>
<rect x="992" y="544" width="32" height="32" fill="url(#pf)"/>
<rect x="1024" y="544" width="32" height="32" fill="url(#pw)"/>
<rect x="1184" y="544" width="32" height="32" fill="url(#pw)"/>
<rect x="1216" y="544" width="1024" height="32" fill="url(#pf)"/>
<rect x="64" y="576" width="32" height="32" fill="url(#pw)"/>
<rect x="96" y="576" width="96" height="32" fill="url(#pf)"/>
<rect x="192" y="576" width="32" height="32" fill="url(#pw)"/>
<rect x="224" y="576" width="608" height="32" fill="url(#pf)"/>
<rect x="832" y="576" width="32" height="32" fill="url(#pw)"/>
<rect x="896" y="576" width="96" height="32" fill="url(#pw)"/>
<rect x="992" y="576" width="32" height="32" fill="url(#pf)"/>
<rect x="1024" y="576" width="32" height="32" fill="url(#pw)"/>
<rect x="1184" y="576" width="32" height="32" fill="url(#pw)"/>
<rect x="1216" y="576" width="128" height="32" fill="url(#pf)"/>
<rect x="1344" y="576" width="224" height="32" fill="url(#pw)"/>
<rect x="1568" y="576" width="64" height="32" fill="url(#pf)"/>
<rect x="1632" y="576" width="96" height="32" fill="url(#pw)"/>
<rect x="1728" y="576" width="32" height="32" fill="url(#pf)"/>
<rect x="1760" y="576" width="224" height="32" fill="url(#pw)"/>
<rect x="1984" y="576" width="160" height="32" fill="url(#pf)"/>
<rect x="2144" y="576" width="96" height="32" fill="url(#pw)"/>
<rect x="64" y="608" width="32" height="32" fill="url(#pw)"/>
<rect x="96" y="608" width="64" height="32" fill="url(#pf)"/>
<rect x="160" y="608" width="64" height="32" fill="url(#pw)"/>
<rect x="224" y="608" width="128" height="32" fill="url(#pf)"/>
<rect x="352" y="608" width="64" height="32" fill="url(#pw)"/>
<rect x="416" y="608" width="96" height="32" fill="url(#pf)"/>
<rect x="512" y="608" width="224" height="32" fill="url(#pw)"/>
<rect x="736" y="608" width="32" height="32" fill="url(#pf)"/>
<rect x="768" y="608" width="96" height="32" fill="url(#pw)"/>
<rect x="896" y="608" width="32" height="32" fill="url(#pw)"/>
<rect x="928" y="608" width="96" height="32" fill="url(#pf)"/>
<rect x="1024" y="608" width="32" height="32" fill="url(#pw)"/>
<rect x="1184" y="608" width="32" height="32" fill="url(#pw)"/>
<rect x="1216" y="608" width="128" height="32" fill="url(#pf)"/>
<rect x="1344" y="608" width="32" height="32" fill="url(#pw)"/>
<rect x="1536" y="608" width="128" height="32" fill="url(#pw)"/>
<rect x="1696" y="608" width="32" height="32" fill="url(#pw)"/>
<rect x="1728" y="608" width="512" height="32" fill="url(#pf)"/>
<rect x="0" y="640" width="32" height="32" fill="url(#pw)"/>
<rect x="64" y="640" width="32" height="32" fill="url(#pw)"/>
<rect x="96" y="640" width="416" height="32" fill="url(#pf)"/>
<rect x="512" y="640" width="32" height="32" fill="url(#pw)"/>
<rect x="704" y="640" width="32" height="32" fill="url(#pw)"/>
<rect x="736" y="640" width="32" height="32" fill="url(#pf)"/>
<rect x="768" y="640" width="32" height="32" fill="url(#pw)"/>
<rect x="896" y="640" width="32" height="32" fill="url(#pw)"/>
<rect x="928" y="640" width="96" height="32" fill="url(#pf)"/>
<rect x="1024" y="640" width="32" height="32" fill="url(#pw)"/>
<rect x="1184" y="640" width="192" height="32" fill="url(#pw)"/>
<rect x="1696" y="640" width="128" height="32" fill="url(#pw)"/>
<rect x="1824" y="640" width="64" height="32" fill="url(#pf)"/>
<rect x="1888" y="640" width="352" height="32" fill="url(#pw)"/>
<rect x="64" y="672" width="160" height="32" fill="url(#pw)"/>
<rect x="224" y="672" width="128" height="32" fill="url(#pf)"/>
<rect x="352" y="672" width="64" height="32" fill="url(#pw)"/>
<rect x="416" y="672" width="32" height="32" fill="url(#pf)"/>
<rect x="448" y="672" width="96" height="32" fill="url(#pw)"/>
<rect x="704" y="672" width="32" height="32" fill="url(#pw)"/>
<rect x="736" y="672" width="32" height="32" fill="url(#pf)"/>
<rect x="768" y="672" width="32" height="32" fill="url(#pw)"/>
<rect x="896" y="672" width="32" height="32" fill="url(#pw)"/>
<rect x="928" y="672" width="96" height="32" fill="url(#pf)"/>
<rect x="1024" y="672" width="32" height="32" fill="url(#pw)"/>
<rect x="1792" y="672" width="32" height="32" fill="url(#pw)"/>
<rect x="1824" y="672" width="64" height="32" fill="url(#pf)"/>
<rect x="1888" y="672" width="32" height="32" fill="url(#pw)"/>
<rect x="192" y="704" width="224" height="32" fill="url(#pw)"/>
<rect x="416" y="704" width="32" height="32" fill="url(#pf)"/>
<rect x="448" y="704" width="32" height="32" fill="url(#pw)"/>
<rect x="704" y="704" width="32" height="32" fill="url(#pw)"/>
<rect x="736" y="704" width="32" height="32" fill="url(#pf)"/>
<rect x="768" y="704" width="224" height="32" fill="url(#pw)"/>
<rect x="992" y="704" width="32" height="32" fill="url(#pf)"/>
<rect x="1024" y="704" width="576" height="32" fill="url(#pw)"/>
<rect x="1792" y="704" width="64" height="32" fill="url(#pw)"/>
<rect x="1856" y="704" width="32" height="32" fill="url(#pf)"/>
<rect x="1888" y="704" width="32" height="32" fill="url(#pw)"/>
<rect x="352" y="736" width="64" height="32" fill="url(#pw)"/>
<rect x="416" y="736" width="32" height="32" fill="url(#pf)"/>
<rect x="448" y="736" width="96" height="32" fill="url(#pw)"/>
<rect x="704" y="736" width="32" height="32" fill="url(#pw)"/>
<rect x="736" y="736" width="832" height="32" fill="url(#pf)"/>
<rect x="1568" y="736" width="32" height="32" fill="url(#pw)"/>
<rect x="1824" y="736" width="32" height="32" fill="url(#pw)"/>
<rect x="1856" y="736" width="32" height="32" fill="url(#pf)"/>
<rect x="1888" y="736" width="32" height="32" fill="url(#pw)"/>
<rect x="1952" y="736" width="128" height="32" fill="url(#pw)"/>
<rect x="352" y="768" width="32" height="32" fill="url(#pw)"/>
<rect x="384" y="768" width="128" height="32" fill="url(#pf)"/>
<rect x="512" y="768" width="32" height="32" fill="url(#pw)"/>
<rect x="704" y="768" width="32" height="32" fill="url(#pw)"/>
<rect x="736" y="768" width="64" height="32" fill="url(#pf)"/>
<rect x="800" y="768" width="800" height="32" fill="url(#pw)"/>
<rect x="1824" y="768" width="32" height="32" fill="url(#pw)"/>
<rect x="1856" y="768" width="32" height="32" fill="url(#pf)"/>
<rect x="1888" y="768" width="96" height="32" fill="url(#pw)"/>
<rect x="1984" y="768" width="64" height="32" fill="url(#pf)"/>
<rect x="2048" y="768" width="192" height="32" fill="url(#pw)"/>
<rect x="352" y="800" width="32" height="32" fill="url(#pw)"/>
<rect x="384" y="800" width="128" height="32" fill="url(#pf)"/>
<rect x="512" y="800" width="32" height="32" fill="url(#pw)"/>
<rect x="704" y="800" width="32" height="32" fill="url(#pw)"/>
<rect x="736" y="800" width="64" height="32" fill="url(#pf)"/>
<rect x="800" y="800" width="32" height="32" fill="url(#pw)"/>
<rect x="1824" y="800" width="32" height="32" fill="url(#pw)"/>
<rect x="1856" y="800" width="384" height="32" fill="url(#pf)"/>
<rect x="352" y="832" width="32" height="32" fill="url(#pw)"/>
<rect x="384" y="832" width="128" height="32" fill="url(#pf)"/>
<rect x="512" y="832" width="32" height="32" fill="url(#pw)"/>
<rect x="704" y="832" width="128" height="32" fill="url(#pw)"/>
<rect x="1824" y="832" width="160" height="32" fill="url(#pw)"/>
<rect x="1984" y="832" width="64" height="32" fill="url(#pf)"/>
<rect x="2048" y="832" width="192" height="32" fill="url(#pw)"/>
<rect x="352" y="864" width="32" height="32" fill="url(#pw)"/>
<rect x="384" y="864" width="128" height="32" fill="url(#pf)"/>
<rect x="512" y="864" width="32" height="32" fill="url(#pw)"/>
<rect x="1952" y="864" width="32" height="32" fill="url(#pw)"/>
<rect x="1984" y="864" width="64" height="32" fill="url(#pf)"/>
<rect x="2048" y="864" width="32" height="32" fill="url(#pw)"/>
<rect x="352" y="896" width="32" height="32" fill="url(#pw)"/>
<rect x="384" y="896" width="128" height="32" fill="url(#pf)"/>
<rect x="512" y="896" width="32" height="32" fill="url(#pw)"/>
<rect x="1952" y="896" width="32" height="32" fill="url(#pw)"/>
<rect x="1984" y="896" width="64" height="32" fill="url(#pf)"/>
<rect x="2048" y="896" width="32" height="32" fill="url(#pw)"/>
<rect x="352" y="928" width="192" height="32" fill="url(#pw)"/>
<rect x="1952" y="928" width="128" height="32" fill="url(#pw)"/>
</svg>
</div>

<div id="dock"></div>
<svg class="abs" style="left:84px;top:1702px;overflow:visible" width="66" height="66" viewBox="0 0 66 66"><defs><linearGradient id="fd1" x1="0" y1="0" x2="0" y2="1"><stop offset="0" stop-color="#3cb6f7"/><stop offset="1" stop-color="#1a6fe6"/></linearGradient></defs><rect width="66" height="66" rx="15" fill="#e8ecf2"/><path d="M15 0h22c-5 12-7 24-6 36h6c-1 10 0 20 2 30H15A15 15 0 010 51V15A15 15 0 0115 0z" fill="url(#fd1)"/><rect x="18" y="18" width="3" height="8" fill="#1b2a44"/><rect x="45" y="18" width="3" height="8" fill="#1b2a44"/><path d="M12 44c12 10 30 10 42 0" stroke="#1b2a44" stroke-width="3" fill="none"/></svg>
<svg class="abs" style="left:170px;top:1702px;overflow:visible" width="66" height="66" viewBox="0 0 66 66"><rect width="66" height="66" rx="15" fill="#b9bcc2"/><rect x="11" y="11" width="12" height="12" rx="3" fill="#63d04c"/><rect x="28" y="11" width="12" height="12" rx="3" fill="#f4b731"/><rect x="45" y="11" width="12" height="12" rx="3" fill="#f08a2a"/><rect x="11" y="28" width="12" height="12" rx="3" fill="#e2463e"/><rect x="28" y="28" width="12" height="12" rx="3" fill="#a9b0b8"/><rect x="45" y="28" width="12" height="12" rx="3" fill="#ee5a6e"/><rect x="11" y="45" width="12" height="12" rx="3" fill="#9b59d0"/><rect x="28" y="45" width="12" height="12" rx="3" fill="#2a9af0"/><rect x="45" y="45" width="12" height="12" rx="3" fill="#49d2a8"/></svg>
<svg class="abs" style="left:256px;top:1702px;overflow:visible" width="66" height="66" viewBox="0 0 66 66"><rect width="66" height="66" rx="15" fill="#f4f4f4"/><circle cx="33" cy="33" r="28" fill="#de4432"/><path d="M33 33L8.75 47A28 28 0 0033 61z" fill="#2e9f4e"/><path d="M33 33L8.75 47A28 28 0 015 33 28 28 0 0119 8.7z" fill="#2e9f4e"/><path d="M33 33h28a28 28 0 01-28 28z" fill="#fcc934"/><path d="M33 33L61 33A28 28 0 0047.3 9z" fill="#de4432"/><circle cx="33" cy="33" r="13" fill="#fff"/><circle cx="33" cy="33" r="10" fill="#3b78e7"/></svg>
<svg class="abs" style="left:341px;top:1702px;overflow:visible" width="66" height="66" viewBox="0 0 66 66"><rect width="66" height="66" rx="15" fill="#e5312f"/><g stroke="#fff" stroke-width="4" fill="none"><path d="M8 22h20M19 14L10 40M14 30h11v18M14 36h11M14 42h11"/><path d="M34 18l4 4M32 30h5v12l-4 5M33 48h26M42 16h14v28H42zM42 25h14M42 34h14"/></g></svg>
<svg class="abs" style="left:427px;top:1702px;overflow:visible" width="66" height="66" viewBox="0 0 66 66"><rect width="66" height="66" rx="15" fill="#9e4b46"/><rect x="2" y="2" width="62" height="62" rx="14" fill="#a65650"/><text x="33" y="43" font-family="Liberation Serif" font-size="30" text-anchor="middle" fill="#f3e9e4">Aa</text><path d="M10 64v8l5-4 5 4v-8z" fill="#d84a3e"/></svg>
<svg class="abs" style="left:513px;top:1702px;overflow:visible" width="66" height="66" viewBox="0 0 66 66"><rect width="66" height="66" rx="15" fill="#f6f6f6"/><circle cx="33" cy="33" r="26" fill="#1e8ef0"/><circle cx="33" cy="33" r="22" fill="none" stroke="#d9ecfd" stroke-width="2" stroke-dasharray="1 2.5"/><path d="M48 16L30 30 36 36z" fill="#f34b3d"/><path d="M18 50L30 30 36 36z" fill="#f2f2f2"/></svg>
<svg class="abs" style="left:598px;top:1702px;overflow:visible" width="66" height="66" viewBox="0 0 66 66"><rect width="66" height="66" rx="15" fill="#2d8cff"/><rect x="11" y="22" width="31" height="23" rx="6" fill="#fff"/><path d="M45 30l11-7v21l-11-7z" fill="#fff"/></svg>
<svg class="abs" style="left:684px;top:1702px;overflow:visible" width="66" height="66" viewBox="0 0 66 66"><rect width="66" height="66" rx="15" fill="#a3160f"/><path d="M14 52c8-6 14-20 17-36 2 14 10 28 24 31-14-2-28 2-41 5z" stroke="#fff" stroke-width="3.5" fill="none" stroke-linejoin="round"/></svg>
<svg class="abs" style="left:769px;top:1702px;overflow:visible" width="66" height="66" viewBox="0 0 66 66"><rect width="66" height="66" rx="15" fill="#fff"/><rect x="18" y="10" width="38" height="14" rx="2" fill="#41a5ee"/><rect x="18" y="24" width="38" height="14" fill="#2b7cd3"/><rect x="18" y="38" width="38" height="16" rx="2" fill="#185abd"/><rect x="8" y="20" width="26" height="26" rx="3" fill="#185abd"/><text x="21" y="41" font-family="Liberation Sans" font-weight="bold" font-size="20" text-anchor="middle" fill="#fff">W</text></svg>
<svg class="abs" style="left:855px;top:1702px;overflow:visible" width="66" height="66" viewBox="0 0 66 66"><rect width="66" height="66" rx="15" fill="#fff"/><circle cx="38" cy="33" r="23" fill="#ed6c47"/><path d="M38 10a23 23 0 0123 23H38z" fill="#ff8f6b"/><path d="M38 33h23a23 23 0 01-23 23z" fill="#c43e1c"/><rect x="8" y="20" width="26" height="26" rx="3" fill="#c43e1c"/><text x="21" y="41" font-family="Liberation Sans" font-weight="bold" font-size="20" text-anchor="middle" fill="#fff">P</text></svg>
<svg class="abs" style="left:940px;top:1702px;overflow:visible" width="66" height="66" viewBox="0 0 66 66"><rect width="66" height="66" rx="15" fill="#fff"/><rect x="18" y="10" width="38" height="46" rx="3" fill="#21a366"/><rect x="37" y="10" width="19" height="15" fill="#33c481"/><rect x="18" y="40" width="38" height="16" fill="#107c41"/><rect x="8" y="20" width="26" height="26" rx="3" fill="#185c37"/><text x="21" y="41" font-family="Liberation Sans" font-weight="bold" font-size="20" text-anchor="middle" fill="#fff">X</text></svg>
<svg class="abs" style="left:1026px;top:1702px;overflow:visible" width="66" height="66" viewBox="0 0 66 66"><rect width="66" height="66" rx="15" fill="#c9ccd0"/><rect x="2" y="2" width="62" height="62" rx="13" fill="#1e1e1e"/><rect x="5" y="5" width="56" height="56" rx="11" fill="#2a2a2a"/><path d="M13 15l7 5-7 5" stroke="#e8e8e8" stroke-width="3" fill="none"/><rect x="23" y="25" width="9" height="3" fill="#e8e8e8"/></svg>
<svg class="abs" style="left:1112px;top:1702px;overflow:visible" width="66" height="66" viewBox="0 0 66 66"><defs><linearGradient id="ijg" x1="0" y1="0" x2="1" y2="1"><stop offset="0" stop-color="#fe315d"/><stop offset="0.5" stop-color="#7e2bf1"/><stop offset="1" stop-color="#087cfa"/></linearGradient></defs><rect x="1" y="3" width="64" height="62" fill="url(#ijg)"/><rect x="8" y="10" width="50" height="48" fill="#000"/><text x="20" y="33" font-family="Liberation Sans" font-weight="bold" font-size="19" fill="#fff">IJ</text><rect x="14" y="46" width="18" height="4" fill="#fff"/></svg>
<svg class="abs" style="left:1198px;top:1702px;overflow:visible" width="66" height="66" viewBox="0 0 66 66"><defs><linearGradient id="msg" x1="0" y1="0" x2="0" y2="1"><stop offset="0" stop-color="#83ee7c"/><stop offset="1" stop-color="#34c24a"/></linearGradient></defs><rect width="66" height="66" rx="15" fill="url(#msg)"/><ellipse cx="33" cy="31" rx="23" ry="18" fill="#fff"/><path d="M18 44l-4 9 12-6z" fill="#fff"/></svg>
<svg class="abs" style="left:1283px;top:1702px;overflow:visible" width="66" height="66" viewBox="0 0 66 66"><rect width="66" height="66" rx="15" fill="#4fca5f"/><ellipse cx="26" cy="27" rx="17" ry="14" fill="#fff"/><ellipse cx="42" cy="40" rx="15" ry="12.5" fill="#fff" stroke="#4fca5f" stroke-width="2"/><circle cx="20" cy="23" r="2.2" fill="#4fca5f"/><circle cx="31" cy="23" r="2.2" fill="#4fca5f"/><circle cx="37" cy="38" r="2" fill="#4fca5f"/><circle cx="47" cy="38" r="2" fill="#4fca5f"/><path d="M16 37l-3 6 7-3z" fill="#fff"/><path d="M50 50l3 5-7-2z" fill="#fff"/></svg>
<svg class="abs" style="left:1369px;top:1702px;overflow:visible" width="66" height="66" viewBox="0 0 66 66"><rect width="66" height="66" rx="15" fill="#fff"/><path d="M50 28a21 17 0 10-24 17l-9 7 14-3c6 1 11 0 15-2" stroke="#2e8ff5" stroke-width="4.5" fill="none" stroke-linejoin="round"/><path d="M42 40l8-6 8 8-8 7z" stroke="#fff" stroke-width="3" fill="none"/><circle cx="50" cy="34" r="4" fill="#6fcf3c"/><circle cx="58" cy="42" r="3.5" fill="#2e8ff5"/><circle cx="42" cy="40" r="4" fill="#ffc02e"/><circle cx="48" cy="50" r="3.5" fill="#f26b2a"/></svg>
<svg class="abs" style="left:1455px;top:1700px;overflow:visible" width="68" height="68" viewBox="0 0 66 66"><circle cx="33" cy="33" r="33" fill="#62d16d"/><path d="M14 24c13-5 28-4 39 3M17 34c11-4 23-3 33 2M20 43c9-3 18-2 26 2" stroke="#111" stroke-width="5.5" stroke-linecap="round" fill="none"/></svg>
<svg class="abs" style="left:1540px;top:1702px;overflow:visible" width="66" height="66" viewBox="0 0 66 66"><rect width="66" height="66" rx="15" fill="#fff"/><circle cx="33" cy="35" r="25" fill="#fbd230"/><path d="M34 12v32a8 8 0 11-4-7V12c8 0 12 4 14 8" fill="#31c27c" stroke="#31c27c" stroke-width="3"/></svg>
<svg class="abs" style="left:1626px;top:1702px;overflow:visible" width="66" height="66" viewBox="0 0 66 66"><defs><linearGradient id="ne" x1="0" y1="0" x2="0" y2="1"><stop offset="0" stop-color="#ee3b3b"/><stop offset="1" stop-color="#d62626"/></linearGradient></defs><rect width="66" height="66" rx="15" fill="url(#ne)"/><path d="M26 17a19 19 0 1020 3M41 14c-3-3-8-2-9 3l3 13c1 5-4 8-8 6s-4-8 0-10" stroke="#fff" stroke-width="4.5" fill="none" stroke-linecap="round"/></svg>
<svg class="abs" style="left:1708px;top:1699px" width="74" height="74" viewBox="0 0 74 74"><defs><linearGradient id="stm" x1="0" y1="0" x2="0" y2="1"><stop offset="0" stop-color="#0f1c3f"/><stop offset="0.6" stop-color="#15477e"/><stop offset="1" stop-color="#1b8fd0"/></linearGradient><linearGradient id="stw" x1="0" y1="0" x2="1" y2="1"><stop offset="0" stop-color="#ffffff"/><stop offset="1" stop-color="#aab4c4"/></linearGradient></defs><circle cx="37" cy="37" r="37" fill="url(#stm)"/><path d="M0 38l22 9 17-13" stroke="url(#stw)" stroke-width="9" fill="none"/><circle cx="49" cy="26" r="13" fill="url(#stw)"/><circle cx="49" cy="26" r="7.5" fill="#17366a"/><circle cx="49" cy="26" r="5" fill="url(#stw)"/><circle cx="26" cy="50" r="9" fill="url(#stw)"/><circle cx="26" cy="50" r="5" fill="#1b4f8a"/></svg>
<svg class="abs" style="left:1797px;top:1702px;overflow:visible" width="66" height="66" viewBox="0 0 66 66"><rect width="66" height="66" rx="15" fill="#f5f5f5"/><path d="M15 0h36a15 15 0 0115 15v5H0v-5A15 15 0 0115 0z" fill="#e9494a"/><text x="33" y="16" font-family="Liberation Sans" font-weight="bold" font-size="13" text-anchor="middle" fill="#fff">JUL</text><text x="33" y="56" font-family="Liberation Sans" font-size="34" text-anchor="middle" fill="#333">31</text></svg>
<svg class="abs" style="left:1882px;top:1702px;overflow:visible" width="66" height="66" viewBox="0 0 66 66"><rect x="0" y="4" width="66" height="62" rx="15" fill="#e6c865"/><rect width="66" height="60" rx="15" fill="#fbe79a"/><path d="M12 22c4-8 6-8 7 0s5-6 8-2 10 0 14 0" stroke="#d7b85a" stroke-width="3" fill="none"/><rect x="10" y="30" width="46" height="3" fill="#d7b85a"/><rect x="10" y="41" width="34" height="3" fill="#d7b85a"/></svg>
<svg class="abs" style="left:1968px;top:1702px;overflow:visible" width="66" height="66" viewBox="0 0 66 66"><rect width="66" height="66" rx="15" fill="#fff"/><path d="M45 17A20 20 0 1053 33" stroke="#4772fa" stroke-width="5.5" fill="none"/><path d="M22 30l10 9 18-20" stroke="#ffb000" stroke-width="6" fill="none"/></svg>
<svg class="abs" style="left:2054px;top:1702px;overflow:visible" width="66" height="66" viewBox="0 0 66 66"><defs><linearGradient id="aps" x1="0" y1="0" x2="0" y2="1"><stop offset="0" stop-color="#2ea3f2"/><stop offset="1" stop-color="#1f6fe3"/></linearGradient></defs><rect width="66" height="66" rx="15" fill="url(#aps)"/><path d="M26 14l20 35M40 14L20 49M12 42h42" stroke="#fff" stroke-width="5" stroke-linecap="round"/></svg>
<svg class="abs" style="left:2140px;top:1702px;overflow:visible" width="66" height="66" viewBox="0 0 66 66"><rect width="66" height="66" rx="15" fill="#a0a3a7"/><circle cx="33" cy="33" r="26" fill="#6a6d71"/><circle cx="33" cy="33" r="21" fill="none" stroke="#c9cbce" stroke-width="4" stroke-dasharray="3 3"/><circle cx="33" cy="33" r="14" fill="#8a8d91"/><path d="M33 33V20M33 33l-11 7M33 33l11 7" stroke="#d5d7da" stroke-width="4"/></svg>
<div class="abs" style="left:2234px;top:1700px;width:2px;height:75px;background:#5a6070"></div>
<svg class="abs" style="left:2264px;top:1702px;overflow:visible" width="66" height="66" viewBox="0 0 66 66"><defs><linearGradient id="xc" x1="0" y1="0" x2="0" y2="1"><stop offset="0" stop-color="#3aa5ee"/><stop offset="1" stop-color="#2469dd"/></linearGradient><linearGradient id="hm" x1="0" y1="0" x2="1" y2="0"><stop offset="0" stop-color="#1f1f1f"/><stop offset="1" stop-color="#5a5a5a"/></linearGradient></defs><rect width="66" height="66" rx="15" fill="url(#xc)"/><rect x="4" y="4" width="58" height="58" rx="12" fill="none" stroke="#9fd0fb" stroke-width="1"/><circle cx="33" cy="33" r="22" fill="none" stroke="#7fbdf5" stroke-width="0.8"/><g stroke="#cfe7fd" stroke-width="1.3" fill="none"><path d="M27 14l19 34M31 12L13 46M10 40h46"/></g><path d="M24 66L50 22" stroke="#2a2a2a" stroke-width="8" stroke-linecap="round"/><path d="M48 26l6-10" stroke="#444" stroke-width="9"/><path d="M38 -2c6-4 14-3 20 1l10 5 6 4-2 6-6-1-6-2-6 5-8-6c1-5-3-8-8-12z" fill="#3a3a3a"/></svg>
<svg class="abs" style="left:2350px;top:1702px;overflow:visible" width="66" height="66" viewBox="0 0 66 66"><defs><linearGradient id="pvs" x1="0" y1="0" x2="0" y2="1"><stop offset="0" stop-color="#a7b6ea"/><stop offset="1" stop-color="#8fb0e0"/></linearGradient><linearGradient id="pvg" x1="0" y1="0" x2="0" y2="1"><stop offset="0" stop-color="#e8ecef"/><stop offset="1" stop-color="#9aa3ab"/></linearGradient></defs><rect width="66" height="66" rx="15" fill="#f2f2f2"/><rect x="5" y="5" width="56" height="57" rx="10" fill="url(#pvs)"/><rect x="5" y="35" width="56" height="8" fill="#1f3f7a"/><path d="M5 43h56v9c0 5-4 10-10 10H15C9 62 5 58 5 52z" fill="#cfe0ea"/><path d="M5 46c8-2 14 2 22 0s10 4 14 6v10H15C9 62 5 58 5 52z" fill="#6d6a63" opacity="0.7"/><path d="M31 45h34l4 20c-6 4-36 4-42 0z" fill="url(#pvg)" opacity="0.95"/><circle cx="44" cy="55" r="3" fill="#7a8590"/><circle cx="53" cy="58" r="3" fill="#7a8590"/><ellipse cx="48" cy="38" rx="15" ry="6" fill="#111"/><rect x="33" y="36" width="30" height="9" fill="#151515"/><ellipse cx="48" cy="45" rx="15" ry="4" fill="#2a2a2a"/></svg>
<svg class="abs" style="left:2436px;top:1702px;overflow:visible" width="66" height="66" viewBox="0 0 66 66"><rect width="66" height="66" rx="15" fill="#fbfbfb"/><g stroke="#c6c6c6" stroke-width="1.2"><path d="M0 17h66"/><path d="M0 25h66"/><path d="M0 33h66"/><path d="M0 41h66"/><path d="M0 49h66"/><path d="M0 57h66"/></g><path d="M11 1v64" stroke="#f29a9a" stroke-width="1"/><path d="M62 -8l4 3-31 71-3-2z" fill="#9fb3c9"/><path d="M62 -8l2 1.5-30 71-1.5-1z" fill="#dfe8f1"/><path d="M32 64l3 2-3 6z" fill="#555"/></svg>
<svg class="abs" style="left:2521px;top:1702px;overflow:visible" width="66" height="66" viewBox="0 0 66 66"><rect x="0" y="-1" width="66" height="67" fill="#f8f8f8" stroke="#c8d3e0" stroke-width="1.5"/><path d="M38 8c-8 6 4 12-2 22M44 19c-6 3 0 6-4 12" stroke="#e89a2c" stroke-width="3" fill="none" stroke-linecap="round"/><path d="M18 36c8 3 22 3 28 0M21 43c7 2 18 2 23 0M14 52c10 5 32 5 40 0M47 36c7-2 8 5 0 8" stroke="#5b83a5" stroke-width="2.5" fill="none"/></svg>
<div class="abs" style="left:2616px;top:1700px;width:2px;height:75px;background:#5a6070"></div>
<div class="abs" style="left:2640px;top:1712px;width:77px;height:45px;background:#2b2d30;border:1px solid #4a4d52"></div>
<div class="abs" style="left:2642px;top:1714px;width:73px;height:41px;background:repeating-linear-gradient(0deg,#3a3d40 0 2px,#2b2b2b 2px 5px)"></div>
<svg class="abs" style="left:2693px;top:1747px" width="24" height="24" viewBox="0 0 66 66"><rect x="1" y="3" width="64" height="62" fill="#7e2bf1"/><rect x="8" y="10" width="50" height="48" fill="#000"/><text x="18" y="36" font-family="Liberation Sans" font-weight="bold" font-size="24" fill="#fff">IJ</text></svg>
<svg class="abs" style="left:2733px;top:1698px" width="60" height="72" viewBox="0 0 60 72"><defs><linearGradient id="tr" x1="0" y1="0" x2="1" y2="0"><stop offset="0" stop-color="#8a8d92"/><stop offset="0.5" stop-color="#c5c8cc"/><stop offset="1" stop-color="#7c7f84"/></linearGradient></defs><path d="M3 14h54l-6 56H9z" fill="url(#tr)" opacity="0.85"/><ellipse cx="30" cy="14" rx="27" ry="6" fill="#9ea1a6"/><path d="M10 10c6-8 12-4 16-8 6 4 14 0 22 6" stroke="#e9e9e9" stroke-width="6" fill="none"/><path d="M14 10l8-4M36 6l6 4" stroke="#3a7bd5" stroke-width="3"/></svg>
<div class="abs" style="left:1325px;top:1692px;width:32px;height:32px;border-radius:50%;background:#e5473d;color:#fff;font-size:21px;text-align:center;line-height:32px">3</div>
<div class="abs" style="left:2182px;top:1693px;width:32px;height:32px;border-radius:50%;background:#e5473d;color:#fff;font-size:21px;text-align:center;line-height:32px">1</div>
<div class="dot" style="left:112px"></div>
<div class="dot" style="left:282px"></div>
<div class="dot" style="left:368px"></div>
<div class="dot" style="left:626px"></div>
<div class="dot" style="left:796px"></div>
<div class="dot" style="left:1054px"></div>
<div class="dot" style="left:1140px"></div>
<div class="dot" style="left:1226px"></div>
<div class="dot" style="left:1310px"></div>
<div class="dot" style="left:1482px"></div>
<div class="dot" style="left:1910px"></div>
<div class="dot" style="left:1996px"></div>
<div class="dot" style="left:2464px"></div>
<div class="dot" style="left:2548px"></div>
</body></html>
